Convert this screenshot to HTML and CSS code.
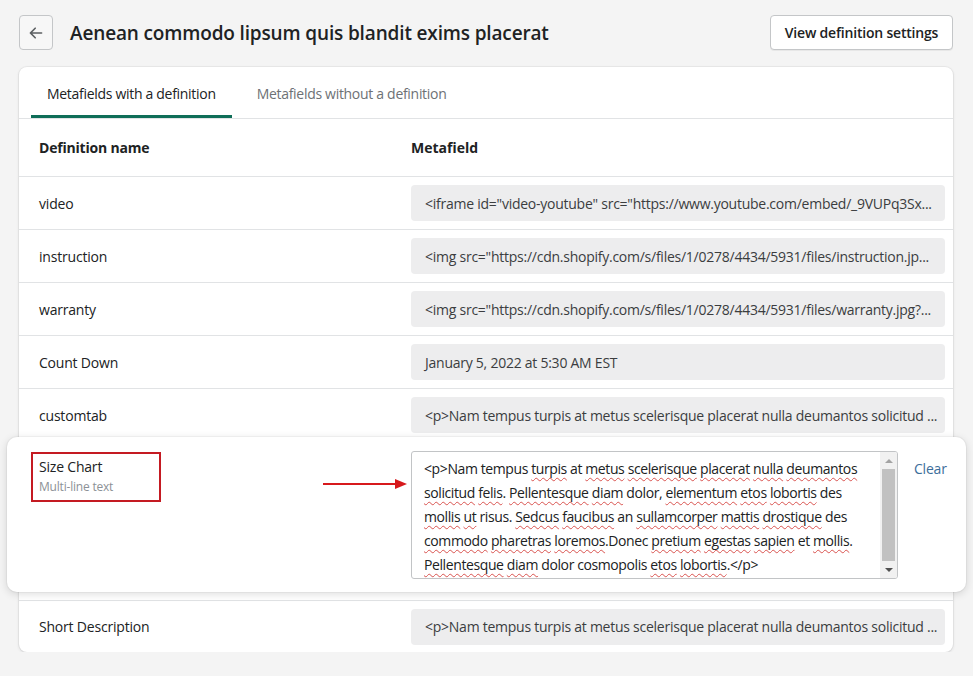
FILE: index.html
```html
<!DOCTYPE html>
<html lang="en">
<head>
<meta charset="utf-8">
<title>Metafields</title>
<link rel="stylesheet" href="styles.css">
</head>
<body>
<div class="page">
  <header class="header">
    <button class="back-btn" aria-label="Back">
      <svg width="16" height="16" viewBox="0 0 20 20"><path d="M17 9H5.41l4.3-4.29a1 1 0 0 0-1.42-1.42l-6 6a1 1 0 0 0 0 1.42l6 6a1 1 0 0 0 1.42-1.42L5.41 11H17a1 1 0 0 0 0-2z" fill="#5c5f62"/></svg>
    </button>
    <h1 class="title">Aenean commodo lipsum quis blandit exims placerat</h1>
    <button class="settings-btn">View definition settings</button>
  </header>

  <section class="card">
    <nav class="tabs">
      <div class="tab tab-active">Metafields with a definition</div>
      <div class="tab">Metafields without a definition</div>
    </nav>

    <div class="row row-head">
      <div class="cell-name">Definition name</div>
      <div class="cell-value">Metafield</div>
    </div>

    <div class="row">
      <div class="cell-name">video</div>
      <div class="cell-value"><div class="field">&lt;iframe id="video-youtube" src="https://www.youtube.com/embed/_9VUPq3Sx...</div></div>
    </div>
    <div class="row">
      <div class="cell-name">instruction</div>
      <div class="cell-value"><div class="field">&lt;img src="https://cdn.shopify.com/s/files/1/0278/4434/5931/files/instruction.jp...</div></div>
    </div>
    <div class="row">
      <div class="cell-name">warranty</div>
      <div class="cell-value"><div class="field">&lt;img src="https://cdn.shopify.com/s/files/1/0278/4434/5931/files/warranty.jpg?...</div></div>
    </div>
    <div class="row">
      <div class="cell-name">Count Down</div>
      <div class="cell-value"><div class="field">January 5, 2022 at 5:30 AM EST</div></div>
    </div>
    <div class="row">
      <div class="cell-name">customtab</div>
      <div class="cell-value"><div class="field">&lt;p&gt;Nam tempus turpis at metus scelerisque placerat nulla deumantos solicitud ...</div></div>
    </div>

    <div class="row-active">
      <div class="active-name">
        <div class="mark">
          <div class="name-main">Size Chart</div>
          <div class="name-sub">Multi-line text</div>
        </div>
      </div>
      <div class="editor">
        <div class="editor-text">&lt;p&gt;Nam tempus <span class="sp">turpis</span> at <span class="sp">metus</span> <span class="sp">scelerisque</span> <span class="sp">placerat</span> <span class="sp">nulla</span> <span class="sp">deumantos</span><br><span class="sp">solicitud</span> <span class="sp">felis</span>. <span class="sp">Pellentesque</span> <span class="sp">diam</span> dolor, <span class="sp">elementum</span> <span class="sp">etos</span> <span class="sp">lobortis</span> des<br><span class="sp">mollis</span> <span class="sp">ut</span> risus. <span class="sp">Sedcus</span> <span class="sp">faucibus</span> an <span class="sp">sullamcorper</span> <span class="sp">mattis</span> <span class="sp">drostique</span> des<br><span class="sp">commodo</span> <span class="sp">pharetras</span> <span class="sp">loremos</span>.Donec <span class="sp">pretium</span> <span class="sp">egestas</span> <span class="sp">sapien</span> et <span class="sp">mollis</span>.<br><span class="sp">Pellentesque</span> <span class="sp">diam</span> dolor cosmopolis <span class="sp">etos</span> <span class="sp">lobortis</span>.&lt;/p&gt;</div>
        <div class="scrollbar">
          <div class="sb-arrow sb-up"></div>
          <div class="sb-track"><div class="sb-thumb"></div></div>
          <div class="sb-arrow sb-down"></div>
        </div>
      </div>
      <a class="clear-link" href="#">Clear</a>
      <svg class="arrow" width="84" height="12" viewBox="0 0 84 12"><line x1="0" y1="6" x2="74" y2="6" stroke="#d7191c" stroke-width="2"/><path d="M72 1 L84 6 L72 11 Z" fill="#d7191c"/></svg>
    </div>

    <div class="row row-last">
      <div class="cell-name">Short Description</div>
      <div class="cell-value"><div class="field">&lt;p&gt;Nam tempus turpis at metus scelerisque placerat nulla deumantos solicitud ...</div></div>
    </div>
  </section>
</div>
</body>
</html>
```

FILE: styles.css
```css
* { box-sizing: border-box; }

body {
  margin: 0;
  background: #f4f4f4;
  font-family: "Open Sans", "Noto Sans", sans-serif;
  font-size: 14px;
  color: #202223;
}

.page {
  padding: 15px 20px 0 19px;
}

.header {
  display: flex;
  align-items: center;
  height: 35px;
}

.back-btn {
  width: 34px;
  height: 35px;
  border: 1px solid #c4c6c8;
  border-radius: 4px;
  background: #f7f7f7;
  display: flex;
  align-items: center;
  justify-content: center;
  padding: 0;
}

.title {
  margin: 0 0 0 17px;
  font-size: 19px;
  font-weight: 600;
  letter-spacing: -0.15px;
  color: #202223;
  flex: 1;
}

.settings-btn {
  width: 183px;
  height: 35px;
  border: 1px solid #c4c6c8;
  border-radius: 4px;
  background: #fff;
  font-family: inherit;
  font-size: 14px;
  font-weight: 600;
  color: #202223;
  box-shadow: 0 1px 0 rgba(0,0,0,0.05);
  letter-spacing: -0.2px;
}

.card {
  margin-top: 17px;
  background: #fff;
  border-radius: 8px;
  box-shadow: 0 0 0 1px rgba(63,63,68,0.05), 0 1px 3px rgba(63,63,68,0.15);
}

.tabs {
  display: flex;
  height: 52px;
  padding-left: 12px;
  border-bottom: 1px solid #e1e3e5;
  gap: 9px;
}

.tab {
  display: flex;
  align-items: center;
  padding: 5px 16px 0;
  color: #6d7175;
  border-bottom: 3px solid transparent;
  white-space: nowrap;
  letter-spacing: -0.3px;
}

.tab-active {
  color: #202223;
  border-bottom-color: #0f6e58;
}

.row {
  display: flex;
  align-items: center;
  height: 53px;
  border-bottom: 1px solid #e1e3e5;
}

.row-head {
  height: 58px;
  font-weight: 700;
}

.cell-name {
  width: 392px;
  padding-left: 20px;
  letter-spacing: -0.2px;
}

.cell-value {
  flex: 1;
  padding-right: 8px;
  min-width: 0;
}

.field {
  height: 36px;
  background: #ededee;
  border-radius: 4px;
  padding: 0 14px;
  display: flex;
  align-items: center;
  white-space: nowrap;
  overflow: hidden;
  color: #3b3d3f;
  letter-spacing: -0.25px;
}

.row-active {
  position: relative;
  display: flex;
  align-items: flex-start;
  height: 155px;
  margin: -5px -13px 0 -12px;
  padding: 15px 0 13px 24px;
  background: #fff;
  border-radius: 10px;
  box-shadow: 0 0 0 1px rgba(0,0,0,0.03), 0 2px 8px rgba(0,0,0,0.14);
}

.active-name {
  width: 380px;
}

.mark {
  width: 130px;
  height: 50px;
  border: 2px solid #c41a22;
  padding: 3px 0 0 6px;
}

.name-main {
  line-height: 20px;
  letter-spacing: -0.2px;
}

.name-sub {
  font-size: 12px;
  line-height: 20px;
  color: #8c9196;
  letter-spacing: -0.2px;
}

.editor {
  display: flex;
  width: 487px;
  height: 128px;
  margin-top: -1px;
  border: 1px solid #c2c4c6;
  border-radius: 3px;
  overflow: hidden;
}

.editor-text {
  flex: 1;
  padding: 5px 0 0 12px;
  line-height: 24px;
  white-space: nowrap;
  color: #202223;
  letter-spacing: -0.4px;
}

.sp {
  text-decoration: underline wavy #d9534f;
  text-decoration-thickness: 1px;
  text-underline-offset: 3px;
}

.scrollbar {
  width: 17px;
  display: flex;
  flex-direction: column;
  background: #f1f1f1;
}

.sb-arrow {
  height: 17px;
  display: flex;
  align-items: center;
  justify-content: center;
}

.sb-up::before {
  content: "";
  border-left: 4px solid transparent;
  border-right: 4px solid transparent;
  border-bottom: 4px solid #a3a3a3;
}

.sb-down::before {
  content: "";
  border-left: 4px solid transparent;
  border-right: 4px solid transparent;
  border-top: 4px solid #505050;
}

.sb-track {
  flex: 1;
  padding: 0 2px;
}

.sb-thumb {
  height: 92px;
  background: #c1c1c1;
}

.clear-link {
  margin-left: 16px;
  margin-top: 7px;
  color: #3c6e9a;
  text-decoration: none;
  letter-spacing: -0.2px;
}

.arrow {
  position: absolute;
  left: 316px;
  top: 41px;
}

.row-last {
  margin-top: 8px;
  border-top: 1px solid #e1e3e5;
  border-bottom: none;
  height: 52px;
}
```
